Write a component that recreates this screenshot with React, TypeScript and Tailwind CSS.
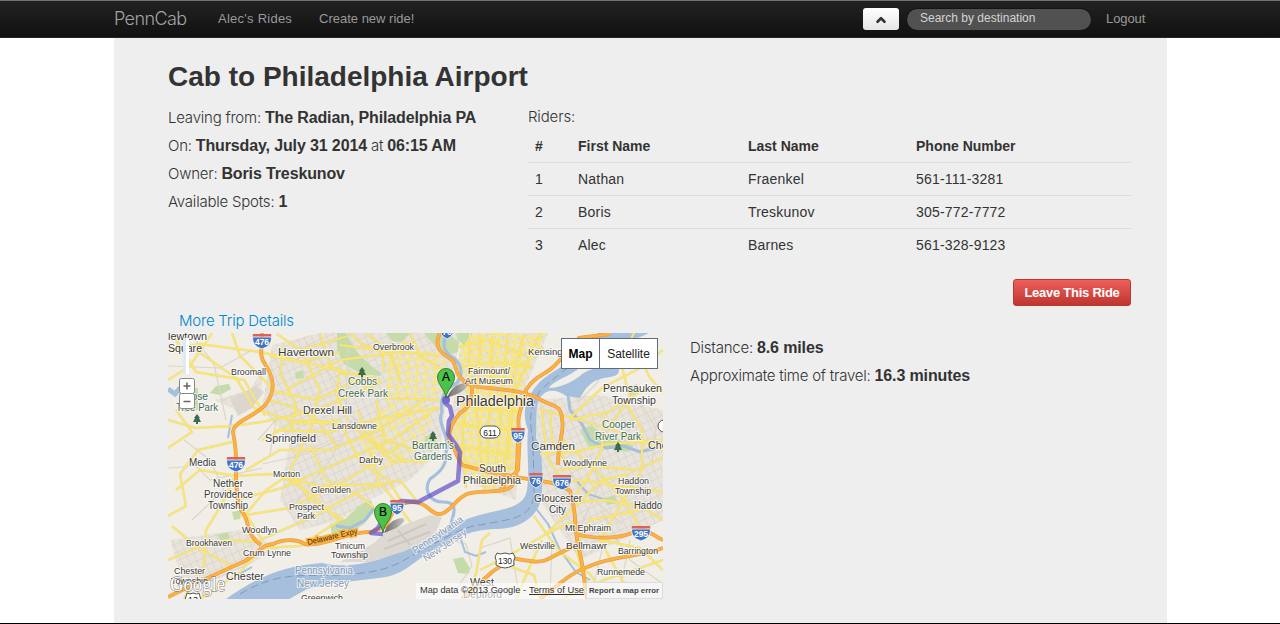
import React from "react";
import { ChevronUp } from "lucide-react";

type LabelProps = {
  x: number;
  y: number;
  w: number;
  children: string;
  size?: number;
  fill?: string;
  rotate?: number;
};

function Label({ x, y, w, children, size = 10, fill = "#3a3a3a", rotate = 0 }: LabelProps) {
  return (
    <text
      x={x}
      y={y}
      fontSize={size}
      fill={fill}
      stroke="#fff"
      strokeOpacity={0.7}
      strokeWidth={2}
      paintOrder="stroke"
      textLength={w}
      lengthAdjust="spacingAndGlyphs"
      transform={rotate ? `rotate(${rotate} ${x} ${y})` : undefined}
    >
      {children}
    </text>
  );
}

function Interstate({ x, y, n }: { x: number; y: number; n: string }) {
  const r = n.length > 2 ? 9.5 : 7;
  return (
    <g transform={`translate(${x} ${y})`}>
      <path
        d={`M${-r} -4 Q${-r - 0.5} 5 0 8 Q${r + 0.5} 5 ${r} -4Z`}
        fill="#3f73c4"
        stroke="#fff"
        strokeWidth={0.8}
      />
      <path d={`M${-r + 0.5} -7 L${r - 0.5} -7 L${r} -4.5 L${-r} -4.5Z`} fill="#d9635c" />
      <text y={4} fontSize={8.5} fontWeight={700} fill="#fff" textAnchor="middle">
        {n}
      </text>
    </g>
  );
}

function Tree({ x, y }: { x: number; y: number }) {
  return (
    <path
      transform={`translate(${x} ${y})`}
      d="M0 -5 L3 -1 L2 -1 L4 3 L1 3 L1 5 L-1 5 L-1 3 L-4 3 L-2 -1 L-3 -1Z"
      fill="#3e6b4c"
    />
  );
}

function Pin({ x, y, letter }: { x: number; y: number; letter: string }) {
  return (
    <g transform={`translate(${x} ${y})`}>
      <path d="M1 0 C3 -6 8 -14 19 -15 C25 -14 18 -7 11 -4Z" fill="url(#shade)" />
      <path
        d="M0 0 C-1 -9 -8.5 -13 -8.5 -21 A8.5 8.5 0 0 1 8.5 -21 C8.5 -13 1 -9 0 0Z"
        fill="#4cc24a"
        stroke="#2c7a26"
        strokeWidth={0.9}
      />
      <text y={-17} fontSize={12} fill="#000" stroke="#000" strokeWidth={0.2} textAnchor="middle">
        {letter}
      </text>
    </g>
  );
}

const parks = [
  "M337 333 L346 333 L355 350 L371 366 L380 372 L381 376 L362 374 L344 364 L337 350Z",
  "M424 333 L448 333 L459 342 L458 352 L444 356 L434 345Z",
  "M386 333 L410 333 L402 342 L392 341Z",
  "M456 333 L472 333 L464 345 L458 340Z",
  "M210 393 L216 386 L229 384 L231 389 L220 395Z",
  "M295 373 L303 370 L304 378 L296 379Z",
  "M232 512 L242 510 L240 519 L234 520Z",
  "M217 535 L228 532 L230 538 L221 541Z",
  "M330 524 L345 519 L360 505 L371 500 L374 512 L364 524 L345 536 L332 535Z",
  "M580 430 L592 425 L604 437 L622 440 L634 446 L628 452 L606 448 L588 446Z",
  "M453 559 L463 557 L470 568 L469 574 L458 573Z",
  "M641 338 L653 342 L650 351 L642 347Z",
  "M425 437 L433 433 L437 444 L431 452 L424 447Z",
  "M604 498 L615 495 L618 503 L607 505Z",
  "M178 388 L198 388 L198 410 L184 412Z",
  "M626 388 L637 384 L641 391 L630 396Z",
];

const towns = [
  "M272 345 L320 333 L462 333 L446 400 L440 450 L410 480 L370 500 L340 520 L300 530 L280 500 L290 440 L262 410Z",
  "M215 400 L250 390 L262 370 L262 395 L240 412Z",
  "M462 333 L548 333 L520 400 L516 500 L462 480 L450 430Z",
  "M535 400 L600 395 L663 410 L663 520 L580 560 L540 500Z",
  "M170 540 L240 530 L280 548 L228 575 L185 590Z",
];

const yellowRoads = [
  "M168 350 L200 344 L260 352 L320 366 L380 380",
  "M168 420 L196 428 L232 426 L262 422 L310 412 L350 396 L382 382",
  "M168 448 L192 432 L176 410",
  "M172 333 L196 372 L244 380 L265 416",
  "M212 333 L190 366 L168 380",
  "M196 350 L236 378 L254 408 L300 424 L340 420",
  "M232 333 L240 356 L276 392 L316 400 L360 378",
  "M277 334 L300 350 L348 336",
  "M300 350 L320 390 L310 430 L290 470 L310 500 L344 520",
  "M320 333 L330 366 L386 398 L440 400",
  "M286 390 L340 360 L400 352 L440 356",
  "M274 430 L330 432 L380 418 L440 408",
  "M262 440 L300 420 L350 426 L402 460 L424 462",
  "M246 470 L280 450 L330 450 L380 430 L424 400",
  "M236 500 L282 488 L340 462 L392 440 L430 414",
  "M240 516 L290 508 L350 478 L400 446",
  "M260 540 L310 518 L362 490 L400 480 L416 500",
  "M176 490 L200 470 L236 476 L270 474 L320 486 L380 484",
  "M168 516 L186 506 L180 474 L198 450 L232 442",
  "M168 560 L200 546 L228 540 L262 542",
  "M184 599 L204 566 L206 530 L222 504 L234 478",
  "M200 599 L240 572 L262 548 L300 546 L340 520",
  "M172 526 L198 548 L232 566",
  "M262 540 L246 514 L266 490 L284 478 L312 494 L338 520",
  "M310 445 L326 480 L360 496 L380 512 L394 504",
  "M370 452 L378 480 L394 500 L412 524",
  "M344 430 L360 462 L388 480 L402 502",
  "M358 410 L366 438 L394 462 L430 460",
  "M376 400 L384 440 L416 450",
  "M350 333 L362 344 L392 356 L400 380",
  "M366 333 L382 346 L384 372",
  "M340 345 L376 350 L412 342",
  "M270 356 L300 362 L340 352",
  "M284 345 L280 374 L296 404 L292 430",
  "M268 400 L290 406 L318 420 L336 446",
  "M340 366 L336 396 L348 420",
  "M470 333 L468 390 L462 430 L466 488",
  "M480 333 L477 410 L484 490",
  "M493 333 L490 400 L486 488",
  "M508 333 L502 404 L494 490",
  "M524 333 L515 370 L508 460",
  "M540 333 L528 360 L512 400 L504 470",
  "M410 333 L420 356 L450 374",
  "M452 422 L480 427 L516 430",
  "M460 405 L490 409 L520 412",
  "M456 446 L480 450 L514 455",
  "M460 462 L488 467 L518 468",
  "M458 347 L488 340 L526 356 L544 348",
  "M462 367 L500 362 L532 367",
  "M540 409 L564 416 L608 428 L663 450",
  "M570 418 L602 388 L640 368 L663 350",
  "M570 420 L608 412 L640 392 L663 390",
  "M608 428 L630 398 L620 360 L634 333",
  "M636 350 L650 378 L663 392",
  "M562 440 L590 464 L624 500 L642 532",
  "M560 470 L590 466 L636 470 L663 458",
  "M540 454 L574 452 L608 444 L663 440",
  "M576 494 L588 478 L602 448 L604 412",
  "M576 502 L604 500 L640 506 L663 520",
  "M560 482 L584 480 L616 486 L663 492",
  "M624 400 L642 430 L642 470 L620 506 L600 540 L622 580 L640 599",
  "M548 532 L574 508 L602 480 L630 474",
  "M534 516 L548 536 L560 552 L590 574 L607 599",
  "M480 570 L510 555 L546 534 L576 520",
  "M466 599 L476 574 L482 540 L490 533",
  "M516 599 L530 566 L542 540",
  "M500 563 L534 575 L540 599",
  "M600 540 L640 548 L663 570",
  "M562 599 L604 580 L640 568 L663 560",
  "M592 599 L576 550 L590 520 L640 510",
  "M542 408 L544 430 L548 460 L560 476",
  "M550 412 L552 440 L566 462",
];

const minorRoads = [
  "M168 366 L220 368 L252 350",
  "M190 333 L214 364 L226 420",
  "M168 468 L196 466 L210 480 L262 468",
  "M184 440 L210 460 L224 490 L192 520",
  "M258 440 L276 420 L270 454",
  "M262 464 L300 456 L340 440",
  "M290 510 L330 460 L352 420",
  "M306 342 L334 380 L350 412",
  "M348 348 L346 410 L366 432",
  "M444 538 L466 544 L472 566 L456 590",
  "M480 548 L510 538 L518 590",
  "M584 350 L604 366 L598 382 L578 402",
  "M640 402 L656 428 L652 462",
  "M560 454 L582 490 L622 524",
  "M600 510 L630 560 L663 584",
  "M552 540 L550 599",
  "M590 454 L600 484 L578 532",
  "M604 542 L590 599",
  "M630 540 L618 599",
];

const highways = [
  "M262 333 C262 350 259 356 265 364 C274 378 276 390 266 404 C254 418 234 420 233 432 C236 448 237 462 236 476 C237 492 236 498 241 510 C251 521 244 533 261 545",
  "M168 597 C190 586 216 574 245 561 C260 552 261 545 273 544 C286 538 300 540 304 544 C325 547 348 531 372 532 L386 526 C393 510 398 502 413 502 C428 502 431 516 441 514 C453 510 455 499 467 494 C481 489 502 495 512 486 C520 474 516 448 519 430 C516 410 526 402 526 390 C536 374 548 375 558 362 L579 338 L610 334",
  "M440 333 C432 348 444 355 452 360 C458 366 452 376 472 386 C490 389 524 389 541 400 C551 406 562 404 562 420 C565 431 558 440 558 465",
  "M472 387 C472 401 470 407 460 413 C454 421 449 427 449 439 C456 450 456 456 462 465 C476 469 494 474 512 476 C532 481 556 480 570 491 C578 515 573 530 580 553 C584 571 584 583 587 599",
  "M576 534 C597 540 620 538 632 533 C644 525 650 534 663 540",
  "M512 558 C534 562 541 564 552 557 L576 545",
  "M540 599 C564 580 574 571 590 566 C610 556 641 557 663 548",
  "M462 599 L492 572 L511 559",
  "M520 433 L518 470 L500 490",
];

const delaware =
  "M168 650 L226 599 C252 580 280 566 322 563 C350 570 384 560 400 550 C426 540 446 526 470 518 C500 508 524 510 527 490 C530 470 526 450 528 430 C522 414 525 404 532 392 C543 374 557 372 570 360 L598 333 L649 333 C630 343 600 346 582 366 C568 378 554 380 549 388 C560 388 572 382 580 376 C591 366 606 368 616 363 C621 370 620 376 610 377 C594 379 588 384 580 398 L566 396 C552 386 542 392 538 402 C535 412 537 427 536 438 C544 452 542 474 542 494 C541 514 521 530 495 529 C470 530 455 538 440 548 C420 554 408 573 386 577 C356 581 330 583 307 589 L284 602Z";

const schuylkill =
  "M447 333 C441 345 445 354 454 358 C463 367 463 375 457 383 C443 390 440 399 442 412 C436 423 452 440 446 452 C447 468 437 474 430 479 C423 490 430 502 443 502 C455 502 456 508 452 520 L450 528";

function RouteMap() {
  return (
    <svg
      width={495}
      height={266}
      viewBox="168 333 495 266"
      className="block"
      fontFamily='"Liberation Sans", Arial, sans-serif'
    >
      <defs>
        <pattern id="streets" width="7" height="8" patternUnits="userSpaceOnUse" patternTransform="rotate(-24)">
          <path d="M0 0H7M0 0V8" stroke="#cdc8c0" strokeWidth="0.8" fill="none" />
        </pattern>
        <pattern id="center" width="8" height="6" patternUnits="userSpaceOnUse" patternTransform="rotate(7)">
          <path d="M0 1H8M1 0V6" stroke="#fbe872" strokeWidth="1.8" fill="none" />
        </pattern>
        <pattern id="west" width="9" height="7" patternUnits="userSpaceOnUse" patternTransform="rotate(4)">
          <path d="M0 1H9M1 0V7" stroke="#fbe872" strokeWidth="1.6" fill="none" />
        </pattern>
        <pattern id="southwest" width="11" height="9" patternUnits="userSpaceOnUse" patternTransform="rotate(-36)">
          <path d="M0 1H11M1 0V9" stroke="#fbe872" strokeWidth="1.5" fill="none" />
        </pattern>
        <linearGradient id="shade" x1="0" x2="1" y1="0" y2="0">
          <stop offset="0" stopColor="#222" stopOpacity="0.65" />
          <stop offset="1" stopColor="#222" stopOpacity="0.2" />
        </linearGradient>
      </defs>
      <rect x="168" y="333" width="495" height="266" fill="#f1eee8" />
      {towns.map((d) => (
        <g key={d}>
          <path d={d} fill="#e8e4dc" />
          <path d={d} fill="url(#streets)" />
        </g>
      ))}
      <path d="M230 399 L256 386 L264 392 L252 408 L238 416Z" fill="#ddd6cf" />
      <path d="M462 333 L546 333 L525 378 L514 470 L490 490 L464 470 L452 432 L472 395 L458 360Z" fill="url(#center)" />
      <path d="M387 344 L436 352 L450 366 L444 396 L386 398Z" fill="url(#west)" />
      <path d="M386 400 L438 405 L424 440 L404 462 L374 474 L360 440Z" fill="url(#southwest)" />
      {parks.map((d) => (
        <path key={d} d={d} fill="#c5dcaa" />
      ))}
      <g fill="none" stroke="#dcd6c7" strokeWidth={1.2}>
        {minorRoads.map((d) => (
          <path key={d} d={d} />
        ))}
      </g>
      <path d={delaware} fill="#a5bfdd" />
      <path d={schuylkill} fill="none" stroke="#a5bfdd" strokeWidth={3.2} />
      <g fill="none" stroke="#a5bfdd" strokeWidth={2}>
        <path d="M168 389 L175 394 L182 386" strokeWidth={5} />
        <path d="M336 526 L350 528 L365 520 L374 508" strokeWidth={3} />
        <path d="M568 395 L570 410 L582 424 L590 440 L606 448 L624 446 L640 452 L656 448" strokeWidth={3} />
        <path d="M460 536 L465 552 L476 556 L486 552" />
        <path d="M534 506 L548 524 L560 550 L576 572 L590 580" />
        <path d="M576 480 L588 494 L606 500" />
        <path d="M232 415 L228 438 M238 575 L252 567" />
      </g>
      <path
        d="M240 594 C280 570 306 577 342 575 C370 573 389 570 406 559 C430 546 462 526 480 525 C510 519 534 519 534 492 L533 440 C528 418 531 405 540 391 C554 377 568 369 590 349"
        fill="none"
        stroke="#8797af"
        strokeWidth={1}
        strokeDasharray="8 4"
      />
      <g fill="none" strokeLinejoin="round">
        {yellowRoads.map((d) => (
          <path key={d} d={d} stroke="#d8d0a2" strokeWidth={2.5} opacity={0.65} />
        ))}
        {yellowRoads.map((d) => (
          <path key={d} d={d} stroke="#fbe66c" strokeWidth={1.8} />
        ))}
      </g>
      <path d="M340 562 L374 543 L386 532 L430 515 L442 517 L434 537 L405 551 L370 562Z" fill="#ddd8d1" />
      <path d="M388 541 L426 524 M384 549 L430 532 M398 530 L410 545" stroke="#cdc8c2" strokeWidth={2} fill="none" />
      <g fill="none" strokeLinejoin="round">
        {highways.map((d) => (
          <path key={d} d={d} stroke="#e59a3c" strokeWidth={3.8} />
        ))}
        {highways.map((d) => (
          <path key={d} d={d} stroke="#fcb144" strokeWidth={2.6} />
        ))}
      </g>
      <path
        d="M446 398 L445 403 L450 407 L452 416 L449 421 L448 434 L456 445 L460 452 L458 481 L418 502 L401 501 L388 512 L378 528 L371 533 L383 534"
        fill="none"
        stroke="#5b4ac8"
        strokeOpacity={0.68}
        strokeWidth={4.5}
        strokeLinejoin="round"
      />
      <circle cx="446" cy="400" r="4" fill="#7467d1" />

      <Label x={168} y={340} w={39}>lewtown</Label>
      <Label x={168} y={352} w={34}>Square</Label>
      <Label x={278} y={356} w={56} size={11}>Havertown</Label>
      <Label x={373} y={350} w={41} size={9}>Overbrook</Label>
      <Label x={231} y={375} w={35} size={9}>Broomall</Label>
      <Label x={348} y={385} w={29} fill="#426b54">Cobbs</Label>
      <Label x={338} y={397} w={50} fill="#426b54">Creek Park</Label>
      <Label x={303} y={414} w={49} size={11}>Drexel Hill</Label>
      <Label x={332} y={429} w={45} size={9}>Lansdowne</Label>
      <Label x={265} y={442} w={51} size={11}>Springfield</Label>
      <Label x={184} y={400} w={24} fill="#426b54">Rose</Label>
      <Label x={176} y={411} w={42} fill="#426b54">Tree Park</Label>
      <Label x={189} y={466} w={27}>Media</Label>
      <Label x={273} y={477} w={27} size={9}>Morton</Label>
      <Label x={359} y={463} w={24} size={9}>Darby</Label>
      <Label x={311} y={493} w={40} size={9}>Glenolden</Label>
      <Label x={213} y={487} w={30}>Nether</Label>
      <Label x={204} y={498} w={49}>Providence</Label>
      <Label x={208} y={509} w={40}>Township</Label>
      <Label x={289} y={510} w={35} size={9}>Prospect</Label>
      <Label x={297} y={519} w={18} size={9}>Park</Label>
      <Label x={242} y={533} w={35} size={9}>Woodlyn</Label>
      <Label x={186} y={546} w={46} size={9}>Brookhaven</Label>
      <Label x={243} y={556} w={48} size={9}>Crum Lynne</Label>
      <Label x={174} y={574} w={31} size={9}>Chester</Label>
      <Label x={171} y={584} w={37} size={9}>Township</Label>
      <Label x={226} y={580} w={38} size={11}>Chester</Label>
      <Label x={335} y={549} w={30} size={9}>Tinicum</Label>
      <Label x={331} y={558} w={37} size={9}>Township</Label>
      <Label x={295} y={574} w={58} fill="#8797af">Pennsylvania</Label>
      <Label x={297} y={587} w={52} fill="#8797af">New Jersey</Label>
      <Label x={415} y={554} w={59} fill="#8797af" rotate={-34}>Pennsylvania</Label>
      <Label x={426} y={562} w={50} fill="#8797af" rotate={-34}>New Jersey</Label>
      <Label x={301} y={601} w={42} size={9}>Greenwich</Label>
      <Label x={412} y={449} w={42} fill="#426b54">Bartram's</Label>
      <Label x={414} y={460} w={38} fill="#426b54">Gardens</Label>
      <Label x={468} y={374} w={42} size={9}>Fairmount/</Label>
      <Label x={465} y={384} w={48} size={9}>Art Museum</Label>
      <Label x={456} y={406} w={78} size={14}>Philadelphia</Label>
      <Label x={479} y={472} w={27}>South</Label>
      <Label x={463} y={484} w={58}>Philadelphia</Label>
      <Label x={528} y={355} w={48} size={9}>Kensington</Label>
      <Label x={603} y={392} w={59}>Pennsauken</Label>
      <Label x={612} y={404} w={44}>Township</Label>
      <Label x={602} y={428} w={33} fill="#426b54">Cooper</Label>
      <Label x={595} y={440} w={46} fill="#426b54">River Park</Label>
      <Label x={531} y={450} w={44} size={11}>Camden</Label>
      <Label x={648} y={449} w={32} size={11}>Cherry</Label>
      <Label x={563} y={466} w={44} size={9}>Woodlynne</Label>
      <Label x={618} y={484} w={31} size={9}>Haddon</Label>
      <Label x={615} y={494} w={36} size={9}>Township</Label>
      <Label x={634} y={509} w={28}>Haddo</Label>
      <Label x={534} y={502} w={48}>Gloucester</Label>
      <Label x={549} y={513} w={17}>City</Label>
      <Label x={565} y={531} w={46} size={9}>Mt Ephraim</Label>
      <Label x={520} y={549} w={35} size={9}>Westville</Label>
      <Label x={566} y={549} w={41} size={9}>Bellmawr</Label>
      <Label x={618} y={554} w={40} size={9}>Barrington</Label>
      <Label x={597} y={575} w={48} size={9}>Runnemede</Label>
      <Label x={470} y={586} w={24}>West</Label>
      <Label x={463} y={598} w={39}>Deptford</Label>

      <Tree x={362} y={372} />
      <Tree x={197} y={419} />
      <Tree x={433} y={436} />
      <Tree x={618} y={447} />
      <Interstate x={262} y={341} n="476" />
      <Interstate x={236} y={464} n="476" />
      <Interstate x={518} y={435} n="95" />
      <Interstate x={536} y={480} n="76" />
      <Interstate x={562} y={482} n="676" />
      <Interstate x={641} y={533} n="295" />
      <Interstate x={397} y={507} n="95" />
      <Interstate x={447} y={331} n="76" />
      <g fill="#fff" stroke="#555" strokeWidth={1}>
        <rect x="480" y="426" width="20" height="12" rx="6" />
        <rect x="658" y="420" width="20" height="12" rx="6" />
        <path d="M497 553 Q500 555 505 553 Q510 555 513 553 L515 557 Q513 561 514 565 Q508 568 505 568 Q501 568 496 565 Q497 560 495 557Z" />
        <path d="M187 593 Q190 595 193 593 Q197 595 199 593 L201 600 L185 600Z" />
      </g>
      <text x="490" y="435.5" fontSize="8.5" textAnchor="middle" fill="#222">611</text>
      <text x="505" y="563.5" fontSize="8.5" textAnchor="middle" fill="#222">130</text>
      <text x="193" y="603" fontSize="9" textAnchor="middle" fill="#222">13</text>
      <text x="308" y="545" fontSize="8" fill="#4a2d00" stroke="#fbb13f" strokeWidth={3} paintOrder="stroke" textLength={51} lengthAdjust="spacingAndGlyphs" transform="rotate(-13 308 545)">
        Delaware Expy
      </text>
      <Pin x={446} y={398} letter="A" />
      <Pin x={383} y={533} letter="B" />

      <rect x="183" y="338" width="6" height="36" fill="#dbe9f8" />
      <rect x="186" y="338" width="3" height="36" fill="#fff" />
      <g fill="#fff" stroke="#888" strokeWidth={1}>
        <rect x="179.500" y="378.500" width="15" height="15" rx="2" />
        <rect x="179.500" y="393.500" width="15" height="15" rx="2" />
      </g>
      <path d="M183.500 386H190.500M187 382.500V389.500M183.500 401.500H190.500" stroke="#666" strokeWidth={1.5} />

      <text
        x="170"
        y="591"
        fontFamily='"Liberation Serif", serif'
        fontSize="20"
        fill="#fff"
        stroke="#777"
        strokeWidth={1.3}
        strokeOpacity={0.8}
        paintOrder="stroke"
        textLength={55}
        lengthAdjust="spacingAndGlyphs"
      >
        Google
      </text>
      <rect x="416" y="583" width="170" height="16" fill="#fff" opacity={0.6} />
      <text x="420" y="593" fontSize="9" fill="#333" textLength={106} lengthAdjust="spacingAndGlyphs">
        Map data ©2013 Google -
      </text>
      <text x="529" y="593" fontSize="9" fill="#333" textLength={55} lengthAdjust="spacingAndGlyphs">
        Terms of Use
      </text>
      <path d="M529 594.500H584" stroke="#333" strokeWidth={1} />
      <rect x="586.500" y="582.500" width="76" height="16" fill="#f5f5f5" stroke="#ddd" />
      <text x="589" y="593" fontSize="8" fontWeight={700} fill="#444" textLength={70} lengthAdjust="spacingAndGlyphs">
        Report a map error
      </text>
    </svg>
  );
}

const riders = [
  ["1", "Nathan", "Fraenkel", "561-111-3281"],
  ["2", "Boris", "Treskunov", "305-772-7772"],
  ["3", "Alec", "Barnes", "561-328-9123"],
];

function Strong({ children }: { children: React.ReactNode }) {
  return (
    <strong className="font-['Liberation_Sans',Arial,sans-serif] text-base/7 font-bold tracking-[-0.13px]">{children}</strong>
  );
}

export default function App() {
  return (
    <div className="flex h-[624px] w-[1280px] flex-col overflow-hidden border-b border-black bg-white font-['Liberation_Sans',Arial,sans-serif] text-sm text-[#333]">
      <header className="flex h-[38px] shrink-0 items-center border-t border-b border-t-[#717573] border-b-[#252525] bg-linear-to-b from-[#222] to-[#111] pl-[114px] text-[13px] text-[#999]">
        <span className="w-[104px] font-['Inter',sans-serif] text-[18px] font-light tracking-[-0.6px] text-[#a3a3a3]">PennCab</span>
        <span className="w-[101px] tracking-[0.25px]">Alec's Rides</span>
        <span className="w-[544px]">Create new ride!</span>
        <button className="flex h-[22px] w-9 items-center justify-center rounded-[3px] bg-linear-to-b from-white to-[#e6e6e6] text-[#333]">
          <ChevronUp className="mt-0.5 size-3.5" strokeWidth={4.5} />
        </button>
        <div className="ml-2 flex h-[21px] w-[184px] items-center rounded-full bg-[#515151] pb-0.5 pl-[13px] text-xs text-[#d4d4d4] shadow-[0_0_0_1px_#151515]">
          Search by destination
        </div>
        <span className="ml-[15px] tracking-[-0.1px]">Logout</span>
      </header>
      <main className="ml-[114px] flex w-[1053px] grow flex-col bg-[#eee] pr-9 pl-[54px]">
        <h1 className="mt-[19px] h-10 text-[28px]/10 font-bold whitespace-nowrap">Cab to Philadelphia Airport</h1>
        <div className="mt-1.5 flex">
          <div className="mt-px w-[360px] font-['Inter',sans-serif] text-[15px]/7 font-light tracking-[-0.22px] whitespace-nowrap">
            <p>Leaving from: <Strong>The Radian, Philadelphia PA</Strong></p>
            <p>On: <Strong>Thursday, July 31 2014</Strong> at <Strong>06:15 AM</Strong></p>
            <p>Owner: <Strong>Boris Treskunov</Strong></p>
            <p>Available Spots: <Strong>1</Strong></p>
          </div>
          <div className="w-[603px]">
            <p className="h-[27px] font-['Inter',sans-serif] text-[15px]/7 font-light tracking-[-0.15px]">Riders:</p>
            <div className="grid h-8 grid-cols-[43px_170px_168px_1fr] items-center pl-[7px] font-bold">
              <span>#</span><span>First Name</span><span>Last Name</span><span>Phone Number</span>
            </div>
            {riders.map((row) => (
              <div key={row[0]} className="grid h-[33px] grid-cols-[43px_170px_168px_1fr] items-center border-t border-[#ddd] pl-[7px] tracking-[0.2px]">
                {row.map((cell) => <span key={cell}>{cell}</span>)}
              </div>
            ))}
            <div className="mt-[18px] flex justify-end">
              <button className="h-[27px] w-[118px] rounded-[3px] border border-[#bd362f] bg-linear-to-b from-[#ee5f5b] to-[#bd362f] pt-px text-[13px] font-bold tracking-[-0.25px] whitespace-nowrap text-white">
                Leave This Ride
              </button>
            </div>
          </div>
        </div>
        <a className="h-[27px] pl-[11px] font-['Inter',sans-serif] text-[15px]/[29px] font-light tracking-[-0.22px] text-[#08c]">More Trip Details</a>
        <div className="flex">
          <div className="relative h-[266px] w-[495px] overflow-hidden">
            <RouteMap />
            <div className="absolute top-[5px] left-[393px] flex h-[31px] w-[97px] border border-[#5d6c80] bg-white text-xs text-black">
              <span className="flex w-[38px] items-center justify-center border-r border-[#5d6c80] font-bold">Map</span>
              <span className="flex grow items-center justify-center text-[#222]">Satellite</span>
            </div>
          </div>
          <div className="mt-px ml-[27px] font-['Inter',sans-serif] text-[15px]/7 font-light tracking-[-0.22px] whitespace-nowrap">
            <p>Distance: <Strong>8.6 miles</Strong></p>
            <p>Approximate time of travel: <Strong>16.3 minutes</Strong></p>
          </div>
        </div>
      </main>
    </div>
  );
}
